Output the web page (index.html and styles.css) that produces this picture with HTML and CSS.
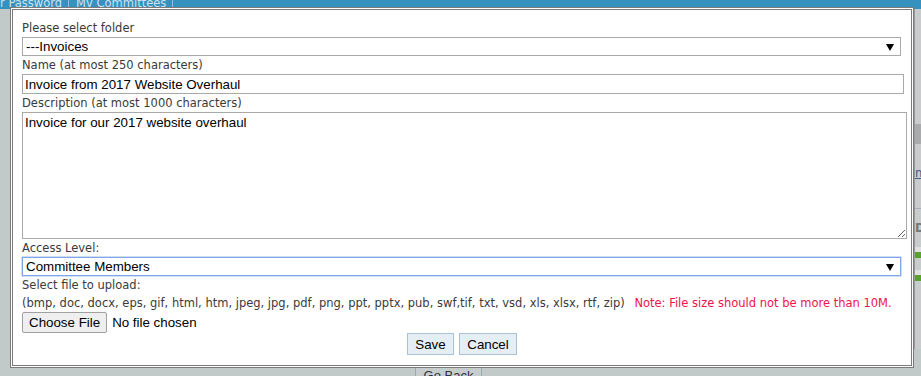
FILE: index.html
```html
<!DOCTYPE html>
<html lang="en">
<head>
  <meta charset="UTF-8">
  <title>Upload Document</title>
  <link rel="stylesheet" href="styles.css">
</head>
<body>

  <div class="page">
    <div class="topbar">
      <span class="tab">r Password</span>
      <span class="tab">My Committees</span>
    </div>
    <div class="side">
      <div class="side-box"></div>
      <div class="side-link">m</div>
      <div class="side-rule"></div>
      <div class="side-head">D</div>
      <div class="side-icon"></div>
      <div class="side-icon"></div>
    </div>
    <div class="footer">
      <span class="goback">Go Back</span>
    </div>
  </div>

  <div class="dialog">
    <div class="label">Please select folder</div>
    <div class="select-wrap folder">
      <select>
        <option>---Invoices</option>
      </select>
    </div>

    <div class="label">Name (at most 250 characters)</div>
    <input type="text" class="text-input" value="Invoice from 2017 Website Overhaul">

    <div class="label">Description (at most 1000 characters)</div>
    <textarea class="desc">Invoice for our 2017 website overhaul</textarea>

    <div class="label">Access Level:</div>
    <div class="select-wrap access">
      <select>
        <option>Committee Members</option>
      </select>
    </div>

    <div class="label">Select file to upload:</div>
    <div class="label types">
      (bmp, doc, docx, eps, gif, html, htm, jpeg, jpg, pdf, png, ppt, pptx, pub, swf,tif, txt, vsd, xls, xlsx, rtf, zip)
      <span class="note">Note: File size should not be more than 10M.</span>
    </div>
    <div class="file-row">
      <span class="file-btn">Choose File</span>
      <span class="file-name">No file chosen</span>
    </div>

    <div class="actions">
      <button class="btn save">Save</button>
      <button class="btn cancel">Cancel</button>
    </div>
  </div>

</body>
</html>
```

FILE: styles.css
```css
html, body {
  margin: 0;
  padding: 0;
}
body {
  width: 921px;
  height: 376px;
  overflow: hidden;
  background-color: #c1c9c9;
  font-family: 'DejaVu Sans', sans-serif;
  position: relative;
}
.page {
  height: 376px;
  position: relative;
}
.topbar {
  height: 9px;
  background-color: #3592bf;
  display: flex;
  overflow: hidden;
}
.tab {
  color: #cfe1ec;
  font-family: 'DejaVu Sans', sans-serif;
  font-size: 11.5px;
  line-height: 12px;
  margin-top: -3px;
  padding: 0 6px 0 0;
  border-right: 1px solid #8fbfd8;
  margin-right: 7px;
}
.side {
  position: absolute;
  left: 914px;
  top: 9px;
  width: 7px;
  height: 340px;
  background-color: #c8cccc;
  border-left: 1px solid #9a9a9a;
}
.side-box {
  margin-top: 115px;
  height: 20px;
  background-color: #a9acac;
}
.side-link {
  margin-top: 22px;
  font-size: 12px;
  color: #4a5a8a;
  text-decoration: underline;
}
.side-rule {
  margin-top: 28px;
  border-top: 1px solid #aab;
}
.side-head {
  margin-top: 12px;
  font-size: 12px;
  color: #777;
  font-weight: bold;
}
.side-icon {
  margin-top: 12px;
  width: 6px;
  height: 6px;
  background-color: #5aa02c;
  border-top: 5px solid #e0e0e0;
}
.footer {
  position: absolute;
  left: 0;
  top: 365px;
  width: 921px;
  display: flex;
  justify-content: center;
}
.goback {
  margin-left: -24px;
  width: 65px;
  height: 24px;
  border: 1px solid #9aa;
  background-color: #c7cccf;
  text-align: center;
  font-family: 'Liberation Sans', sans-serif;
  font-size: 13px;
  line-height: 20px;
  color: #333;
}

/* modal dialog */
.dialog {
  position: absolute;
  left: 10px;
  top: 7px;
  width: 889px;
  height: 346px;
  border: 3px double #7a7a7a;
  background-color: #fff;
  padding: 9px 0 0 9px;
}
.label {
  font-size: 11.5px;
  line-height: 16px;
  color: #3a3a3a;
  margin: 1px 0;
  white-space: nowrap;
}
.select-wrap {
  position: relative;
  width: 879px;
  height: 19px;
}
.select-wrap select {
  display: block;
  -webkit-appearance: none;
  appearance: none;
  width: 100%;
  height: 19px;
  margin: 0;
  padding: 0 0 0 3px;
  border: 1px solid #a9a9a9;
  border-radius: 0;
  background-color: #fff;
  font-family: 'Liberation Sans', sans-serif;
  font-size: 13.33px;
  color: #000;
  outline: none;
}
.select-wrap::after {
  content: "";
  position: absolute;
  right: 7px;
  top: 7px;
  border-left: 4px solid transparent;
  border-right: 4px solid transparent;
  border-top: 7px solid #000;
}
.access select {
  border-color: #7fa6e6;
  box-shadow: 0 0 0 0.5px #9fbcf0;
}
.text-input {
  display: block;
  width: 882px;
  height: 20px;
  box-sizing: border-box;
  margin: 0;
  padding: 0 2px;
  border: 1px solid #a9a9a9;
  font-family: 'Liberation Sans', sans-serif;
  font-size: 13.33px;
  color: #000;
}
.desc {
  display: block;
  width: 885px;
  height: 127px;
  box-sizing: border-box;
  margin: 0;
  padding: 2px 2px;
  border: 1px solid #a9a9a9;
  font-family: 'Liberation Sans', sans-serif;
  font-size: 13.33px;
  color: #000;
  resize: vertical;
}
.types {
  margin-top: 2px;
}
.note {
  color: #f0124a;
  margin-left: 6px;
}
.file-row {
  display: flex;
  align-items: center;
  height: 21px;
  margin-top: 1px;
}
.file-btn {
  display: inline-block;
  height: 21px;
  box-sizing: border-box;
  padding: 0 6px;
  border: 1px solid #a0a0a0;
  border-radius: 2px;
  background-color: #efefef;
  font-family: 'Liberation Sans', sans-serif;
  font-size: 13.33px;
  line-height: 19px;
  color: #000;
}
.file-name {
  margin-left: 5px;
  font-family: 'Liberation Sans', sans-serif;
  font-size: 13.33px;
  color: #000;
}
.actions {
  display: flex;
  justify-content: center;
  gap: 5px;
  margin-left: -9px;
}
.btn {
  height: 22px;
  padding: 0 6px;
  border: 1px solid #a9c2d6;
  background-color: #e6eef5;
  font-family: 'Liberation Sans', sans-serif;
  font-size: 13.33px;
  color: #000;
  cursor: pointer;
}
.save {
  width: 47px;
}
.cancel {
  width: 58px;
}
```
